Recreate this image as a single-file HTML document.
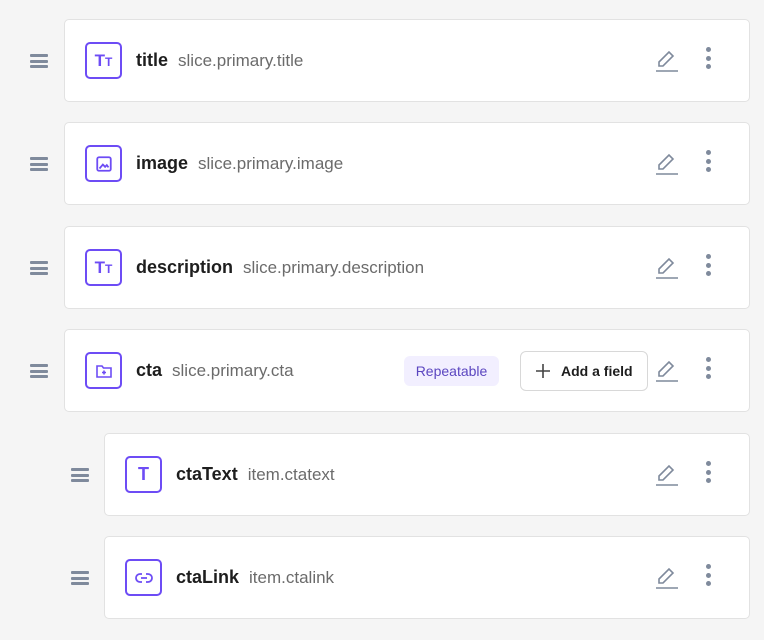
<!DOCTYPE html>
<html><head><style>
*{box-sizing:border-box;margin:0;padding:0}
body{width:764px;height:640px;background:#f5f5f5;font-family:"Liberation Sans",sans-serif;position:relative;overflow:hidden}
.card{position:absolute;right:14px;height:83px;background:#fff;border:1px solid #e2e2e2;border-radius:5px}
.ham{position:absolute;width:18px;height:14px}
.ham i{display:block;height:3px;background:#7f8a9c;border-radius:1px;margin-bottom:2.5px}
.ic{position:absolute;left:20px;top:22px;width:37px;height:37px;border:2px solid #6d4cf5;border-radius:5px;display:flex;align-items:center;justify-content:center;color:#6d4cf5;font-weight:bold;font-size:16px}
.nm{position:absolute;left:71px;top:30px;font-size:18px;font-weight:bold;color:#1e1e1e;white-space:nowrap}
.nm span{font-weight:normal;font-size:17px;color:#6b6b6b;margin-left:10px}
.pen{position:absolute;right:70px;top:29px}
.dots{position:absolute;right:38px;top:27px;width:5px}
.dots i{display:block;width:5px;height:5px;border-radius:50%;background:#7f8a9c;margin-bottom:3.5px}
</style></head><body>

<div class="ham" style="left:30px;top:54px"><i></i><i></i><i></i></div>
<div class="card" style="left:64px;top:19px">
<div class="ic"><span style="font-size:17px">T<span style="font-size:12px">T</span></span></div>
<div class="nm">title<span>slice.primary.title</span></div>
<svg class="pen" width="24" height="24" viewBox="0 0 24 24" fill="none" stroke="#7f8a9c" stroke-width="1.6"><path d="M4 17 L4 13 L14 3 L18 7 L8 17 Z"/><path d="M1 22 H23"/></svg>
<div class="dots"><i></i><i></i><i></i></div>
</div>

<div class="ham" style="left:30px;top:157px"><i></i><i></i><i></i></div>
<div class="card" style="left:64px;top:122px">
<div class="ic"><svg width="18" height="18" viewBox="0 0 16 16" fill="none" stroke="#6d4cf5" stroke-width="1.6"><rect x="2" y="2" width="12" height="12" rx="1.5"/><path d="M4 12 L7 8.5 L9 10.5 L10.5 9 L12 11"/></svg></div>
<div class="nm">image<span>slice.primary.image</span></div>
<svg class="pen" width="24" height="24" viewBox="0 0 24 24" fill="none" stroke="#7f8a9c" stroke-width="1.6"><path d="M4 17 L4 13 L14 3 L18 7 L8 17 Z"/><path d="M1 22 H23"/></svg>
<div class="dots"><i></i><i></i><i></i></div>
</div>

<div class="ham" style="left:30px;top:261px"><i></i><i></i><i></i></div>
<div class="card" style="left:64px;top:226px">
<div class="ic"><span style="font-size:17px">T<span style="font-size:12px">T</span></span></div>
<div class="nm">description<span>slice.primary.description</span></div>
<svg class="pen" width="24" height="24" viewBox="0 0 24 24" fill="none" stroke="#7f8a9c" stroke-width="1.6"><path d="M4 17 L4 13 L14 3 L18 7 L8 17 Z"/><path d="M1 22 H23"/></svg>
<div class="dots"><i></i><i></i><i></i></div>
</div>

<div class="ham" style="left:30px;top:364px"><i></i><i></i><i></i></div>
<div class="card" style="left:64px;top:329px">
<div class="ic"><svg width="18" height="16" viewBox="0 0 18 16" fill="none" stroke="#6d4cf5" stroke-width="1.6"><path d="M2 3 H7 L8.5 5 H16 V14 H2 Z"/><path d="M9 7.5 V11.5 M7 9.5 H11"/></svg></div>
<div class="nm">cta<span>slice.primary.cta</span></div>
<div style="position:absolute;left:339px;top:26px;width:95px;height:30px;background:#f2efff;border-radius:6px;color:#5b46c0;font-size:14px;line-height:30px;text-align:center">Repeatable</div>
<div style="position:absolute;left:455px;top:21px;width:128px;height:40px;border:1px solid #d8d8d8;border-radius:6px;background:#fff;font-size:14px;font-weight:bold;color:#1e1e1e;line-height:38px;padding-left:40px">
<svg style="position:absolute;left:14px;top:11px" width="16" height="16" viewBox="0 0 16 16" stroke="#444" stroke-width="1.6"><path d="M8 1V15M1 8H15"/></svg>Add a field</div>
<svg class="pen" width="24" height="24" viewBox="0 0 24 24" fill="none" stroke="#7f8a9c" stroke-width="1.6"><path d="M4 17 L4 13 L14 3 L18 7 L8 17 Z"/><path d="M1 22 H23"/></svg>
<div class="dots"><i></i><i></i><i></i></div>
</div>

<div class="ham" style="left:71px;top:468px"><i></i><i></i><i></i></div>
<div class="card" style="left:104px;top:433px">
<div class="ic"><span style="font-size:18px">T</span></div>
<div class="nm">ctaText<span>item.ctatext</span></div>
<svg class="pen" width="24" height="24" viewBox="0 0 24 24" fill="none" stroke="#7f8a9c" stroke-width="1.6"><path d="M4 17 L4 13 L14 3 L18 7 L8 17 Z"/><path d="M1 22 H23"/></svg>
<div class="dots"><i></i><i></i><i></i></div>
</div>

<div class="ham" style="left:71px;top:571px"><i></i><i></i><i></i></div>
<div class="card" style="left:104px;top:536px">
<div class="ic"><svg width="18" height="12" viewBox="0 0 18 12" fill="none" stroke="#6d4cf5" stroke-width="1.8"><path d="M7 2H5A4 4 0 0 0 5 10H7M11 2H13A4 4 0 0 1 13 10H11M6 6H12"/></svg></div>
<div class="nm">ctaLink<span>item.ctalink</span></div>
<svg class="pen" width="24" height="24" viewBox="0 0 24 24" fill="none" stroke="#7f8a9c" stroke-width="1.6"><path d="M4 17 L4 13 L14 3 L18 7 L8 17 Z"/><path d="M1 22 H23"/></svg>
<div class="dots"><i></i><i></i><i></i></div>
</div>

</body></html>
